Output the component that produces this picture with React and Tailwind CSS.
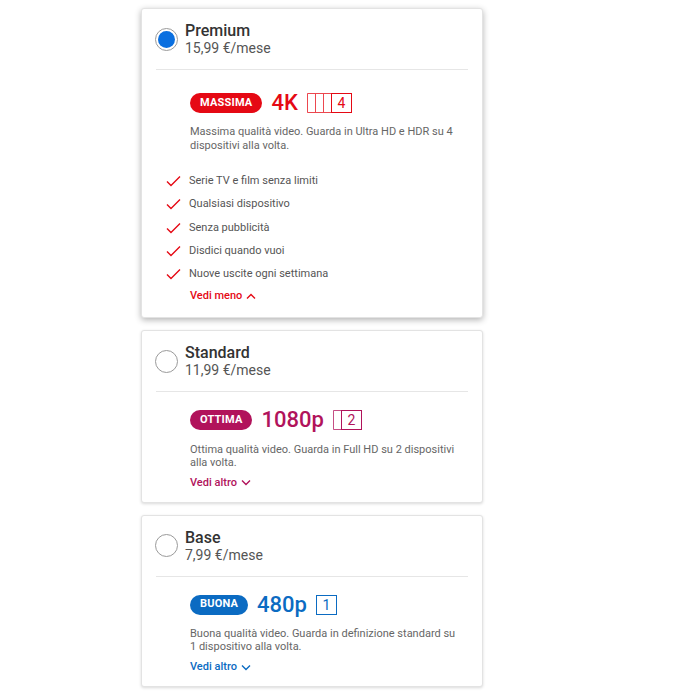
import React from 'react';

const FONT = { fontFamily: 'Roboto, "Noto Sans", Arial, sans-serif' };

const plans = [
  {
    name: 'Premium',
    price: '15,99 €/mese',
    selected: true,
    badge: 'MASSIMA',
    res: '4K',
    screens: 4,
    color: '#e50914',
    desc: 'Massima qualità video. Guarda in Ultra HD e HDR su 4 dispositivi alla volta.',
    features: [
      'Serie TV e film senza limiti',
      'Qualsiasi dispositivo',
      'Senza pubblicità',
      'Disdici quando vuoi',
      'Nuove uscite ogni settimana',
    ],
  },
  {
    name: 'Standard',
    price: '11,99 €/mese',
    badge: 'OTTIMA',
    res: '1080p',
    screens: 2,
    color: '#b1135b',
    desc: 'Ottima qualità video. Guarda in Full HD su 2 dispositivi alla volta.',
  },
  {
    name: 'Base',
    price: '7,99 €/mese',
    badge: 'BUONA',
    res: '480p',
    screens: 1,
    color: '#0b6bc2',
    desc: 'Buona qualità video. Guarda in definizione standard su 1 dispositivo alla volta.',
  },
];

function Screens({ count, color }) {
  // stacked frames behind the front box
  const back = count - 1;
  const step = 8;
  const w = back * step + 21;
  return (
    <svg width={w} height="20" viewBox={`0 0 ${w} 20`} className="block">
      {Array.from({ length: back }).map((_, i) => {
        const x = 0.5 + i * step;
        return (
          <path
            key={i}
            d={`M${x + step} 0.5 H${x} V19.5 H${x + step}`}
            fill="none"
            stroke={color}
            strokeWidth="1"
            opacity="0.75"
          />
        );
      })}
      <rect x={back * step + 0.5} y="0.5" width="20" height="19" fill="#fff" stroke={color} strokeWidth="1" />
      <text
        x={back * step + 10.5}
        y="15"
        textAnchor="middle"
        fontSize="14"
        fill={color}
        style={FONT}
      >
        {count}
      </text>
    </svg>
  );
}

function Check() {
  return (
    <svg width="15" height="12" viewBox="0 0 15 12" className="shrink-0">
      <path d="M1 6.5 L5 10.5 L14 1.5" fill="none" stroke="#e50914" strokeWidth="1.4" />
    </svg>
  );
}

function Chevron({ up, color }) {
  return (
    <svg width="10" height="7" viewBox="0 0 10 7">
      <path
        d={up ? 'M1 5.5 L5 1.5 L9 5.5' : 'M1 1.5 L5 5.5 L9 1.5'}
        fill="none"
        stroke={color}
        strokeWidth="1.4"
      />
    </svg>
  );
}

function PlanCard({ plan }) {
  const sel = plan.selected;
  return (
    <div
      className={`bg-white rounded-[3px] border border-[#e3e3e3] ${
        sel ? 'shadow-[0_2px_6px_rgba(0,0,0,0.3)]' : 'shadow-[0_1px_3px_rgba(0,0,0,0.15)]'
      }`}
    >
      {/* header */}
      <div className="flex items-center gap-[7px] px-[13px] pt-[13px] pb-[13px]">
        {sel ? (
          <span className="w-[23px] h-[23px] rounded-full border border-[#9a9a9a] flex items-center justify-center shrink-0">
            <span className="w-[17px] h-[17px] rounded-full bg-[#0a6fe0]" />
          </span>
        ) : (
          <span className="w-[23px] h-[23px] rounded-full border border-[#9a9a9a] shrink-0" />
        )}
        <div>
          <div className="text-[16px] leading-[18px] font-medium text-[#333]">{plan.name}</div>
          <div className="text-[14px] leading-[16px] text-[#555]">{plan.price}</div>
        </div>
      </div>
      <div className="mx-[14px] border-t border-[#e6e6e6]" />

      {/* body */}
      <div className={`pl-[48px] pr-[14px] ${sel ? 'pt-[23px] pb-[14px]' : 'pt-[18px] pb-[12px]'}`}>
        <div className="flex items-center h-[20px]">
          <span
            className="h-[20px] px-[10px] rounded-full text-white text-[11px] font-bold flex items-center tracking-[0.2px]"
            style={{ backgroundColor: plan.color }}
          >
            {plan.badge}
          </span>
          <span className="ml-[9px] text-[22px] leading-[20px] font-medium" style={{ color: plan.color }}>
            {plan.res}
          </span>
          <span className="ml-[9px]">
            <Screens count={plan.screens} color={plan.color} />
          </span>
        </div>
        <p
          className={`text-[11px] text-[#666] pr-[6px] ${
            sel ? 'mt-[12px] leading-[14px]' : 'mt-[12.5px] leading-[13px]'
          }`}
        >
          {plan.desc}
        </p>

        {plan.features && (
          <ul className="mt-[21px] -ml-[24px] flex flex-col gap-[9.25px]">
            {plan.features.map((f) => (
              <li key={f} className="flex items-center gap-[8px] text-[11px] leading-[14px] text-[#555]">
                <Check />
                <span>{f}</span>
              </li>
            ))}
          </ul>
        )}

        <div
          className={`flex items-center gap-[4px] text-[11px] leading-[14px] font-medium ${
            plan.features ? 'mt-[8px]' : 'mt-[7px]'
          }`}
          style={{ color: plan.color }}
        >
          <span>{plan.features ? 'Vedi meno' : 'Vedi altro'}</span>
          <Chevron up={!!plan.features} color={plan.color} />
        </div>
      </div>
    </div>
  );
}

export default function App() {
  return (
    <div className="min-h-[700px] bg-white" style={FONT}>
      <div className="ml-[141px] w-[342px] pt-[8px] flex flex-col gap-[12px]">
        {plans.map((p) => (
          <PlanCard key={p.name} plan={p} />
        ))}
      </div>
    </div>
  );
}
